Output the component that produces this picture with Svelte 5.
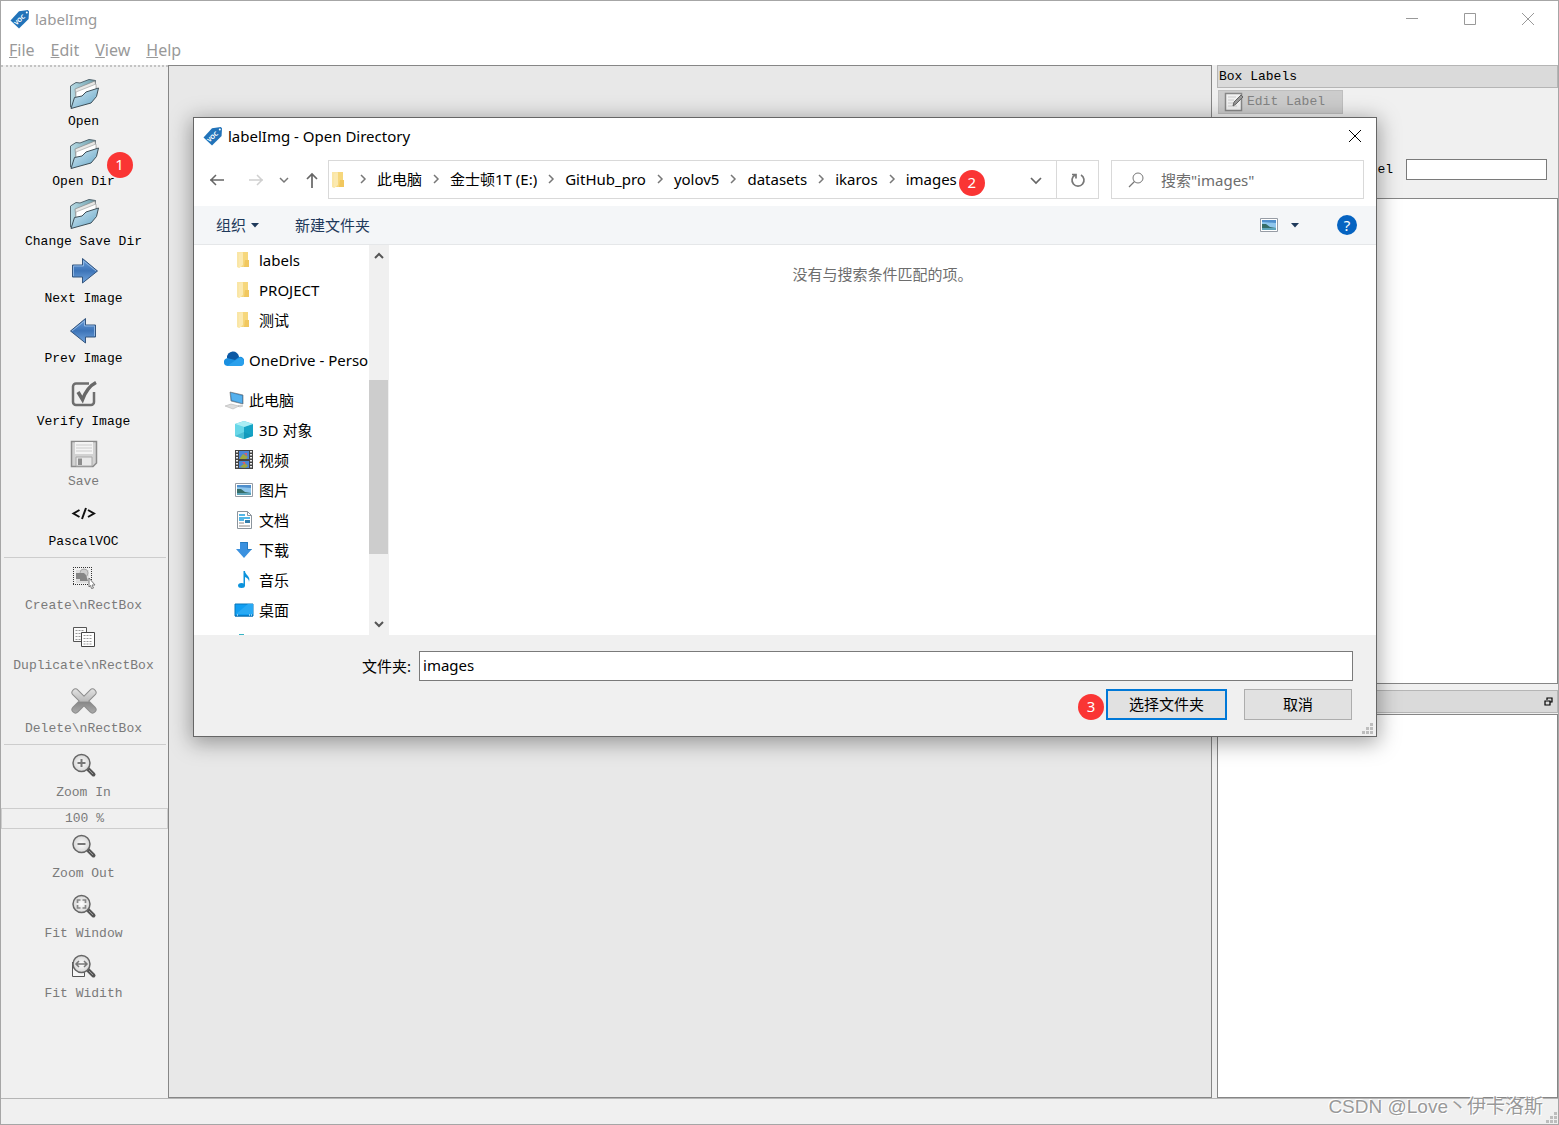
<script>
	const menus = ['File', 'Edit', 'View', 'Help'];

	const toolGroups = [
		[
			{ icon: 'folder', label: 'Open' },
			{ icon: 'folder', label: 'Open Dir', badge: '1' },
			{ icon: 'folder', label: 'Change Save Dir' },
			{ icon: 'next', label: 'Next Image', small: true },
			{ icon: 'prev', label: 'Prev Image', small: true },
			{ icon: 'verify', label: 'Verify Image' },
			{ icon: 'save', label: 'Save', disabled: true },
			{ icon: 'format', label: 'PascalVOC' }
		],
		[
			{ icon: 'create', label: 'Create\\nRectBox', small: true, disabled: true },
			{ icon: 'copy', label: 'Duplicate\\nRectBox', small: true, disabled: true },
			{ icon: 'delete', label: 'Delete\\nRectBox', disabled: true }
		],
		[{ icon: 'zoomin', label: 'Zoom In', small: true, disabled: true }]
	];

	const zoomTools = [
		{ icon: 'zoomout', label: 'Zoom Out', small: true, disabled: true },
		{ icon: 'fitwindow', label: 'Fit Window', small: true, disabled: true },
		{ icon: 'fitwidth', label: 'Fit Widith', small: true, disabled: true }
	];

	const crumbs = ['此电脑', '金士顿1T (E:)', 'GitHub_pro', 'yolov5', 'datasets', 'ikaros', 'images'];

	const tree = [
		{ icon: 'dir', label: 'labels', level: 2 },
		{ icon: 'dir', label: 'PROJECT', level: 2 },
		{ icon: 'dir', label: '测试', level: 2 },
		{ icon: 'cloud', label: 'OneDrive - Personal', level: 1 },
		{ icon: 'pc', label: '此电脑', level: 1 },
		{ icon: 'cube', label: '3D 对象', level: 2 },
		{ icon: 'video', label: '视频', level: 2 },
		{ icon: 'picture', label: '图片', level: 2 },
		{ icon: 'doc', label: '文档', level: 2 },
		{ icon: 'download', label: '下载', level: 2 },
		{ icon: 'music', label: '音乐', level: 2 },
		{ icon: 'desktop', label: '桌面', level: 2 },
		{ icon: 'disk', label: 'Windows', level: 2 }
	];

	let folder = $state('images');
	let search = $state('');
	let zoom = $state('100 %');
	let defaultLabel = $state('');
</script>

{#snippet logo()}
	<svg class="logo" viewBox="0 0 20 20" width="20" height="20" aria-hidden="true">
		<path d="M.5 11.5 9 2.2 17.8 1 19 2.2 18.6 10 9 19.5z" fill="#2273b9" />
		<text x="9.5" y="12.6" text-anchor="middle" transform="rotate(-42 10 10.5)">VOC</text>
		<circle cx="16.8" cy="3.4" r="1" fill="#fff" />
	</svg>
{/snippet}

{#snippet lens()}
	<path d="m20 20 5.500 5.500" stroke="#555" stroke-width="4" stroke-linecap="round" />
	<path d="m21 21 4 4" stroke="#999" stroke-width="1" />
	<circle cx="13.500" cy="14" r="8.500" fill="url(#glass)" stroke="#666" stroke-width="1.500" />
{/snippet}

{#snippet toolIcon(name)}
	<svg viewBox="0 0 32 32" width="32" height="32" fill="none" aria-hidden="true">
		{#if name === 'folder'}
			<path d="M2.500 29V8l5.500-3.500 4 .5L21 1.500l6.500 1-1 9L4 30z" fill="url(#folderBack)" stroke="#53656e" />
			<path d="M7 11 27 3l1 7-20 9z" fill="#e8e8e6" stroke="#888" stroke-width=".7" />
			<path d="m8 14 20-8v6L8 21z" fill="#fff" stroke="#999" stroke-width=".6" />
			<path d="m3 30.500 3.500-11L14 18l4-4 12.500-4-2 8.500L23 25z" fill="url(#folderFront)" stroke="#3e4f58" />
		{:else if name === 'next'}
			<path d="M4.500 10h10V3.500L29.500 16 14.500 28v-6h-10z" fill="url(#blue)" stroke="#33547d" />
			<path d="M5.500 21V11h10V6L28 16" stroke="#8fb6e2" />
		{:else if name === 'prev'}
			<path d="M27.500 10h-10V3.500L2.500 16l15 12v-6h10z" fill="url(#blue)" stroke="#33547d" />
			<path d="M26.500 21V11h-10V6L4 16" stroke="#8fb6e2" />
		{:else if name === 'verify'}
			<path d="M21 5.500H8a3 3 0 0 0-3 3V24a3 3 0 0 0 3 3h15a3 3 0 0 0 3-3V14" stroke="#6e6e6e" stroke-width="2.500" />
			<path d="m10 14 4.500 7.500C17 15 21 8 28 4.500" stroke="#686868" stroke-width="3.500" />
		{:else if name === 'save'}
			<path d="M3.500 3.500h25V25L25 28.500H3.500z" fill="#d2d2d2" stroke="#8b8b8b" stroke-width="1.500" />
			<path d="M7 4h18v12H7z" fill="#f4f4f4" />
			<path d="M8 7h16M8 10h16M8 13h16" stroke="#ccc" />
			<path d="M8 19h16v9H8z" fill="#e9e9e9" stroke="#aaa" />
			<path d="M10 20.500h4V27h-4z" fill="#8d8d8d" />
		{:else if name === 'format'}
			<path d="m11.500 12-6 3.500 6 3.500M20 12l6 3.500-6 3.500M18 10l-4 11" stroke="#111" stroke-width="2" />
		{:else if name === 'create'}
			<path d="M5 5.500h19M5 22.500h19M5.500 5v18M23.500 5v18" stroke="#333" stroke-dasharray="1 1" />
			<path d="M8 8h13v13H8z" fill="#dedede" />
			<circle cx="16" cy="11" r="4" fill="#ccc" stroke="#aaa" />
			<path d="M8 11h8l2 2 2 6h-8v-2H8z" fill="#858585" />
			<path d="m21 16 6 7h-3l1.500 3-2 .5-1-3-1.500 1.500z" fill="#fff" stroke="#777" />
		{:else if name === 'copy'}
			<path d="M5.500 5.500h13v14h-13z" fill="#fafafa" stroke="#555" />
			<path d="M7.500 8.500h9m-9 3h6m-6 3h5m-5 3h5" stroke="#999" stroke-dasharray="2 1" />
			<path d="M13.500 10.500h13v14h-13z" fill="#fff" stroke="#444" />
			<path d="M15.500 13.500h9m-9 3h9m-9 3h9m-9 2.500h9" stroke="#999" stroke-dasharray="2 1" />
		{:else if name === 'delete'}
			<path d="m7.500 7.500 17 17M24.500 7.500l-17 17" stroke="#8c8c8c" stroke-width="8" stroke-linecap="round" />
			<path d="m7.500 7.500 17 17M24.500 7.500l-17 17" stroke="url(#cross)" stroke-width="6" stroke-linecap="round" />
		{:else if name === 'zoomin'}
			{@render lens()}
			<path d="M9.500 14h8m-4-4v8" stroke="#777" stroke-width="2" />
		{:else if name === 'zoomout'}
			{@render lens()}
			<path d="M9.500 14h8" stroke="#777" stroke-width="2" />
		{:else if name === 'fitwindow'}
			{@render lens()}
			<path d="M9.500 13v-3h3m2 0h3v3m0 2v3h-3m-2 0h-3v-3" stroke="#888" stroke-width="1.700" />
		{:else if name === 'fitwidth'}
			<path d="M4.500 12v14.500h12V20" fill="#f7f7f7" stroke="#555" />
			{@render lens()}
			<path d="M8 14h11m-8-3-3 3 3 3m5-6 3 3-3 3" stroke="#777" stroke-width="1.500" />
		{/if}
	</svg>
{/snippet}

{#snippet placeIcon(name)}
	<svg viewBox="0 0 20 20" width="20" height="20" fill="none" aria-hidden="true">
		{#if name === 'dir'}
			<path d="M7 2h7v9l1 1v5H6z" fill="#f6d77c" />
			<path d="M3 2h5v14l-3 2-2-1z" fill="#fae6a6" />
			<path d="m5 4 4-2v13l-4 3z" fill="#fbe9b0" />
			<path d="M11 10h4v7h-5z" fill="#f1c75e" />
		{:else if name === 'cloud'}
			<path d="M0 13a4 4 0 0 1 4-5 6 6 0 0 1 11-1 4 4 0 0 1 5 5c0 3-2 4-4 4H4c-2 0-4-1-4-3z" fill="#1a8fe0" />
			<path d="M3 8a6 6 0 0 1 12-1l-4 3z" fill="#0c59a4" />
			<path d="M3 16 15 8a4 4 0 0 1 5 4c0 3-2 4-4 4z" fill="#2aa0ec" />
		{:else if name === 'pc'}
			<path d="m6 2 13 3v9L7 11z" fill="#3f91ce" stroke="#666" stroke-width=".6" />
			<path d="m7 3 11 3v7L8 10z" fill="#55b1ee" />
			<path d="m1 16 6-2 8 2-6 3zM14 16l3-1 2 1-3 1z" fill="#ddd" stroke="#aaa" stroke-width=".5" />
		{:else if name === 'cube'}
			<path d="m10 1 9 3v12l-9 3-9-3V4z" fill="#42c5df" />
			<path d="m1 4 9 3v12l-9-3z" fill="#68d7e8" />
			<path d="m10 7 9-3v12l-9 3z" fill="#16a3c5" />
			<path d="m1 4 9-3 9 3-9 3z" fill="#a9edf4" />
			<path d="m10 12 9 4-9 3-9-3z" fill="#0987aa" opacity=".3" />
		{:else if name === 'video'}
			<path d="M1 0h18v19H1z" fill="#444" />
			<path d="M5 1h10v8H5zM5 11h10v7H5z" fill="#4b86d6" />
			<path d="m6 8 3-4 5 3-2 2H6zM6 17l5-4 3 3-3 2z" fill="#a0a83e" />
			<path d="M10 3h3v3zM8 12h3v3z" fill="#d95d70" />
			<path d="M3 1v18M17 1v18" stroke="#eee" stroke-width="2" stroke-dasharray="1.500 1.500" />
		{:else if name === 'picture'}
			<path d="M1.500 3.500h17v13h-17z" fill="#fff" stroke="#969ca5" />
			<path d="M3 5h14v10H3z" fill="#8ec6ed" />
			<path d="M3 5h14v3L3 7z" fill="#4f8fcc" />
			<path d="m3 9 4 0 4 3 6 1v2H3z" fill="#356d68" />
			<path d="M3 13h14v2H3z" fill="#5da4ba" />
		{:else if name === 'doc'}
			<path d="M3.500 1.500h10l4 4v13h-14z" fill="#fff" stroke="#8b949c" />
			<path d="M13.500 1.500v4h4" stroke="#8b949c" />
			<path d="M5 5h6M5 8h11M5 10h5" stroke="#1ba0df" stroke-width="1.500" />
			<path d="M11 10h5v3h-5z" fill="#337eac" />
			<path d="M5 13h5m-5 3h11" stroke="#888" />
		{:else if name === 'download'}
			<path d="M6 2h8v7h4l-8 9-8-9h4z" fill="#3b91df" />
			<path d="M6.500 2.500h7v7h4" stroke="#257abe" />
		{:else if name === 'music'}
			<ellipse cx="7.500" cy="15.500" rx="3.500" ry="2.500" fill="#0c93dc" />
			<path d="M9.500 16V1h1.500c0 4 6 5 4 11 0-3-2-4-4-5v9" fill="#0c93dc" />
		{:else if name === 'desktop'}
			<path d="M1 4h18v12H1z" fill="#109ef2" stroke="#0877b9" />
			<path d="m2 14 12-10h5v10z" fill="#28a9f4" />
			<path d="M1 16h18" stroke="#076ab0" />
			<path d="M3 15h1m11 0h1m1 0h1" stroke="#fff" />
		{:else if name === 'disk'}
			<path d="M5 4h5v4H5z" fill="#37b5c5" />
		{/if}
	</svg>
{/snippet}

{#snippet chevron(down = false)}
	<svg class="chevron" viewBox="0 0 10 10" width="10" height="10" fill="none" aria-hidden="true">
		<path d={down ? 'm1 3 4 4 4-4' : 'm3 1 4 4-4 4'} stroke="#777" stroke-width="1.500" />
	</svg>
{/snippet}

{#snippet tool(item)}
	<button class="tool" class:small={item.small} disabled={item.disabled}>
		<span class="tool-icon">
			{@render toolIcon(item.icon)}
			{#if item.badge}<span class="badge">{item.badge}</span>{/if}
		</span>
		<span>{item.label}</span>
	</button>
{/snippet}

{#snippet grip()}
	<svg class="grip" viewBox="0 0 12 12" width="12" height="12" aria-hidden="true">
		<path d="M8 0h3v3H8zM4 4h3v3H4zM8 4h3v3H8zM0 8h3v3H0zM4 8h3v3H4zM8 8h3v3H8z" fill="#bdbdbd" />
	</svg>
{/snippet}

<svg class="defs" width="0" height="0" aria-hidden="true">
	<defs>
		<linearGradient id="folderBack" x2="1"><stop stop-color="#b9dbe5" /><stop offset="1" stop-color="#6a9dab" /></linearGradient>
		<linearGradient id="folderFront" x2="1" y2="1"><stop stop-color="#d4eaf3" /><stop offset="1" stop-color="#66a6c8" /></linearGradient>
		<linearGradient id="blue" x2="0" y2="1"><stop stop-color="#6a9fdc" /><stop offset=".5" stop-color="#3d74b8" /><stop offset="1" stop-color="#74a7df" /></linearGradient>
		<linearGradient id="cross" gradientUnits="userSpaceOnUse" x1="0" y1="4" x2="0" y2="28"><stop stop-color="#e2e2e2" /><stop offset=".5" stop-color="#bbb" /><stop offset=".55" stop-color="#888" /><stop offset="1" stop-color="#aaa" /></linearGradient>
		<radialGradient id="glass"><stop stop-color="#fff" /><stop offset="1" stop-color="#d6d6d6" /></radialGradient>
	</defs>
</svg>

<div class="window">
	<header class="titlebar">
		{@render logo()}
		<span>labelImg</span>
		<div class="window-buttons">
			<button aria-label="Minimize"><svg viewBox="0 0 12 12" width="12" height="12"><path d="M0 5.500h12" /></svg></button>
			<button aria-label="Maximize"><svg viewBox="0 0 12 12" width="12" height="12"><path d="M.5.5h11v11H.5z" /></svg></button>
			<button aria-label="Close"><svg viewBox="0 0 12 12" width="12" height="12"><path d="m0 0 12 12M12 0 0 12" /></svg></button>
		</div>
	</header>

	<nav class="menubar">
		{#each menus as menu}
			<button><u>{menu[0]}</u>{menu.slice(1)}</button>
		{/each}
	</nav>

	<div class="workspace">
		<aside class="toolbar">
			{#each toolGroups as group, i}
				{#if i > 0}<hr />{/if}
				{#each group as item}
					{@render tool(item)}
				{/each}
			{/each}
			<input class="zoom" aria-label="Zoom level" bind:value={zoom} disabled />
			{#each zoomTools as item}
				{@render tool(item)}
			{/each}
		</aside>

		<main class="canvas"></main>

		<aside class="docks">
			<section class="dock labels-dock">
				<h2>Box Labels</h2>
				<button class="edit-label" disabled>
					<svg viewBox="0 0 20 20" width="20" height="20" fill="none" aria-hidden="true">
						<path d="M1.500 1.500h16v17h-16z" fill="#f3f3f3" stroke="#888" stroke-width="1.500" />
						<path d="M4 5h8M4 8h6M4 11h5M4 14h9" stroke="#ccc" />
						<path d="m9 14 1-4 7-7 2 2-7 7z" fill="#999" stroke="#666" />
					</svg>
					Edit Label
				</button>
				<div class="default-label">
					<label><input type="checkbox" />Use default label</label>
					<input type="text" aria-label="Default label" bind:value={defaultLabel} />
				</div>
				<div class="list"></div>
			</section>
			<section class="dock files-dock" aria-label="File List">
				<header>
					<button aria-label="Float">
						<svg viewBox="0 0 9 9" width="9" height="9"><path d="M3 3V1h5v4H6M2.500 1h6M1 4h5v4H1zM.5 4h6" stroke="#000" stroke-width="1.200" /></svg>
					</button>
				</header>
				<div class="list"></div>
			</section>
		</aside>
	</div>

	<footer class="statusbar">
		<span class="watermark">CSDN @Love丶伊卡洛斯</span>
		{@render grip()}
	</footer>

	<div class="dialog" role="dialog" aria-label="labelImg - Open Directory">
		<header class="dialog-title">
			{@render logo()}
			<span>labelImg - Open Directory</span>
			<button aria-label="Close"><svg viewBox="0 0 12 12" width="12" height="12"><path d="m0 0 12 12M12 0 0 12" stroke="#000" /></svg></button>
		</header>

		<div class="location">
			<div class="history">
				<button aria-label="Back"><svg viewBox="0 0 16 16" width="16" height="16"><path d="M15 8H1m6-5L2 8l5 5" stroke="#666" stroke-width="1.500" /></svg></button>
				<button class="forward" aria-label="Forward" disabled><svg viewBox="0 0 16 16" width="16" height="16"><path d="M1 8h14M9 3l5 5-5 5" stroke="#d0d0d0" stroke-width="1.500" /></svg></button>
				<button aria-label="Recent locations">{@render chevron(true)}</button>
				<button aria-label="Up"><svg viewBox="0 0 16 16" width="16" height="16"><path d="M8 16V2M3 7l5-5 5 5" stroke="#666" stroke-width="1.700" /></svg></button>
			</div>
			<div class="address">
				{@render placeIcon('dir')}
				<ol>
					{#each crumbs as crumb}
						<li>{@render chevron()}<a href="#{crumb}">{crumb}</a></li>
					{/each}
				</ol>
				<span class="badge">2</span>
				<button class="expand" aria-label="Previous locations"><svg viewBox="0 0 12 12" width="12" height="12"><path d="m1 4 5 5 5-5" stroke="#666" stroke-width="1.700" /></svg></button>
				<button class="refresh" aria-label="Refresh"><svg viewBox="0 0 16 16" width="16" height="16"><path d="M11 3a6 6 0 1 1-6 0M2 2.500h4v4" stroke="#777" stroke-width="1.700" /></svg></button>
			</div>
			<label class="search">
				<svg viewBox="0 0 16 16" width="16" height="16"><circle cx="10" cy="6" r="5" stroke="#777" /><path d="M6.500 9.500 1 15" stroke="#777" stroke-width="1.200" /></svg>
				<input type="text" aria-label="搜索" placeholder={'搜索"images"'} bind:value={search} />
			</label>
		</div>

		<div class="commands">
			<button>组织 <svg viewBox="0 0 8 5" width="8" height="5"><path d="M0 0h8L4 4.500z" fill="#1e395b" /></svg></button>
			<button>新建文件夹</button>
			<button class="view" aria-label="View">
				{@render placeIcon('picture')}
				<svg viewBox="0 0 8 5" width="8" height="5"><path d="M0 0h8L4 4.500z" fill="#1e395b" /></svg>
			</button>
			<button class="help" aria-label="Help">?</button>
		</div>

		<div class="browser">
			<ul class="tree">
				{#each tree as node}
					<li class:root={node.level === 1}>{@render placeIcon(node.icon)}<span>{node.label}</span></li>
				{/each}
			</ul>
			<div class="scrollbar">
				<svg viewBox="0 0 10 10" width="10" height="10"><path d="m1 7 4-4 4 4" stroke="#555" stroke-width="2" /></svg>
				<div class="track"><div class="thumb"></div></div>
				<svg viewBox="0 0 10 10" width="10" height="10"><path d="m1 3 4 4 4-4" stroke="#555" stroke-width="2" /></svg>
			</div>
			<p class="empty">没有与搜索条件匹配的项。</p>
		</div>

		<form class="dialog-footer" onsubmit={(e) => e.preventDefault()}>
			<div class="field">
				<label for="folder">文件夹:</label>
				<input id="folder" type="text" bind:value={folder} />
			</div>
			<div class="actions">
				<span class="badge">3</span>
				<button class="primary" type="submit">选择文件夹</button>
				<button type="button">取消</button>
			</div>
			{@render grip()}
		</form>
	</div>
</div>

<style>
	:global(body) {
		margin: 0;
	}

	.window,
	.window * {
		box-sizing: border-box;
	}

	.window {
		position: relative;
		display: flex;
		flex-direction: column;
		min-height: 100vh;
		border: 1px solid #a6a6a6;
		background: #f0f0f0;
		color: #000;
		font: 15px/20px 'Noto Sans', 'Noto Sans CJK SC', sans-serif;
	}

	.defs {
		position: absolute;
	}

	svg {
		display: block;
		flex: none;
	}

	button {
		display: flex;
		align-items: center;
		padding: 0;
		border: 0;
		background: none;
		color: inherit;
		font: inherit;
	}

	button svg,
	.scrollbar svg,
	.search svg {
		fill: none;
	}

	input {
		padding: 0;
		border: 0;
		border-radius: 0;
		color: inherit;
		font: inherit;
		outline: none;
	}

	.logo text {
		fill: #fff;
		font: bold 6px 'Open Sans', sans-serif;
	}

	.badge {
		display: flex;
		align-items: center;
		justify-content: center;
		width: 26px;
		height: 26px;
		padding-bottom: 2px;
		border-radius: 50%;
		background: #fa3534;
		color: #fff;
		font: 15px/20px 'Noto Sans', sans-serif;
	}

	.titlebar {
		display: flex;
		align-items: center;
		gap: 5px;
		height: 36px;
		padding: 0 1px 0 9px;
		background: #fff;
		color: #999;
	}

	.window-buttons {
		display: flex;
		margin-left: auto;
	}

	.window-buttons button {
		justify-content: center;
		width: 58px;
		height: 36px;
		stroke: #999;
	}

	.menubar {
		display: flex;
		gap: 16px;
		height: 28px;
		padding: 0 0 3px 8px;
		background: #fff;
		color: #999;
		font-size: 16px;
	}

	.workspace {
		display: flex;
		flex: 1;
		font-family: 'Liberation Mono', monospace;
		font-size: 13px;
	}

	.toolbar {
		display: flex;
		flex-direction: column;
		width: 167px;
		padding-top: 7px;
		border-top: 2px dotted #c4c4c4;
	}

	.tool {
		flex-direction: column;
		gap: 4px;
		height: 60px;
		padding: 4px 2px 0 0;
		line-height: 16px;
		white-space: nowrap;
	}

	.tool.small {
		gap: 7px;
	}

	.tool:disabled {
		color: #7a7a7a;
	}

	.tool-icon {
		position: relative;
		display: flex;
		align-items: center;
		height: 32px;
	}

	.small .tool-icon {
		height: 26px;
	}

	.tool-icon .badge {
		position: absolute;
		top: 14px;
		left: 39px;
	}

	hr {
		width: 162px;
		height: 1px;
		margin: 3px auto;
		border: 0;
		background: #cdcdcd;
	}

	.zoom {
		width: 100%;
		height: 21px;
		border: 1px solid #cdcdcd;
		background: #f0f0f0;
		color: #7a7a7a;
		text-align: center;
	}

	.canvas {
		flex: 1;
		border: 1px solid #868686;
		background: #e8e8e8;
	}

	.docks {
		display: flex;
		flex-direction: column;
		gap: 6px;
		width: 346px;
		padding-left: 5px;
	}

	.dock {
		display: flex;
		flex-direction: column;
	}

	.labels-dock {
		flex: 619;
	}

	.files-dock {
		flex: 408;
	}

	.dock h2,
	.dock header {
		display: flex;
		align-items: center;
		height: 23px;
		margin: 0;
		padding: 0 4px 0 1px;
		border: 1px solid #b5b5b5;
		background: #dadada;
		font-size: 13px;
		font-weight: normal;
	}

	.dock header {
		justify-content: flex-end;
	}

	.edit-label {
		gap: 3px;
		width: 125px;
		height: 24px;
		margin: 2px 1px;
		padding-left: 5px;
		border: 1px solid #bfbfbf;
		background: #ccc;
		color: #838383;
	}

	.default-label {
		display: flex;
		align-items: center;
		justify-content: flex-end;
		gap: 13px;
		margin: 43px 11px 18px 0;
	}

	.default-label label {
		display: flex;
		gap: 4px;
	}

	.default-label input[type='text'] {
		width: 141px;
		height: 21px;
		border: 1px solid #7a7a7a;
		background: #fff;
	}

	.list {
		flex: 1;
		border: 1px solid #868686;
		background: #fff;
	}

	.files-dock .list {
		margin-top: 1px;
	}

	.statusbar {
		display: flex;
		align-items: center;
		justify-content: flex-end;
		height: 26px;
		border-top: 1px solid #b5b5b5;
	}

	.statusbar .grip {
		align-self: flex-end;
	}

	.watermark {
		margin: 0 3px 10px 0;
		color: #999;
		font: 19px/20px 'Liberation Sans', 'Noto Sans CJK SC', sans-serif;
		text-shadow: 1px 1px 0 #fff, -1px -1px 0 #fff;
	}

	.dialog {
		position: absolute;
		top: 116px;
		right: 181px;
		left: 192px;
		border: 1px solid #666;
		background: #fff;
		box-shadow: 0 4px 20px 2px rgba(0, 0, 0, 0.35);
	}

	.dialog-title {
		display: flex;
		align-items: center;
		gap: 5px;
		height: 36px;
		padding: 0 15px 0 9px;
	}

	.dialog-title button {
		margin-left: auto;
	}

	.location {
		display: flex;
		margin: 6px 12px 7px 0;
	}

	.history {
		display: flex;
		align-items: center;
		gap: 15px;
		width: 134px;
		padding-left: 15px;
	}

	.forward {
		margin-left: 8px;
	}

	.address {
		display: flex;
		align-items: center;
		flex: 1;
		height: 39px;
		border: 1px solid #d9d9d9;
	}

	.address ol {
		display: flex;
		margin: 0;
		padding: 0 0 2px;
		list-style: none;
		white-space: nowrap;
	}

	.address li {
		display: flex;
		align-items: center;
	}

	.address .chevron {
		margin: 0 9px;
	}

	.address a {
		color: inherit;
		text-decoration: none;
	}

	.address .badge {
		margin: 6px 0 0 2px;
	}

	.expand {
		margin-left: auto;
		margin-right: 14px;
	}

	.refresh {
		justify-content: center;
		align-self: stretch;
		width: 42px;
		border-left: 1px solid #d9d9d9;
	}

	.search {
		display: flex;
		align-items: center;
		gap: 17px;
		width: 253px;
		margin-left: 12px;
		padding: 0 16px;
		border: 1px solid #d9d9d9;
	}

	.search input {
		width: 100%;
		min-width: 0;
	}

	.search input::placeholder {
		color: #6d6d6d;
		opacity: 1;
	}

	.commands {
		display: flex;
		align-items: center;
		gap: 36px;
		height: 39px;
		padding: 0 19px 0 22px;
		border-bottom: 1px solid #e5e7e9;
		background: #f4f6f8;
		color: #1e395b;
	}

	.commands button {
		gap: 5px;
	}

	.commands .view {
		gap: 12px;
		margin: 0 2px 0 auto;
	}

	.commands .help {
		justify-content: center;
		width: 20px;
		height: 20px;
		border-radius: 50%;
		background: #0563c1;
		color: #fff;
	}

	.browser {
		display: flex;
		height: 390px;
	}

	.tree {
		width: 175px;
		margin: 0;
		padding: 0;
		overflow: hidden;
		list-style: none;
		white-space: nowrap;
	}

	.tree li {
		display: flex;
		align-items: center;
		gap: 5px;
		height: 30px;
		padding-left: 40px;
	}

	.tree span {
		padding-bottom: 1px;
	}

	.tree .root {
		margin-top: 10px;
		padding-left: 30px;
	}

	.scrollbar {
		display: flex;
		flex-direction: column;
		align-items: center;
		gap: 5px;
		width: 20px;
		padding: 6px 1px 6px 0;
		background: #f0f0f0;
	}

	.track {
		display: flex;
		flex-direction: column;
		align-self: stretch;
		justify-content: center;
		flex: 1;
		padding-top: 54px;
	}

	.thumb {
		height: 174px;
		background: #cdcdcd;
	}

	.empty {
		flex: 1;
		margin: 19px 0 0;
		color: #6d6d6d;
		text-align: center;
	}

	.dialog-footer {
		position: relative;
		padding: 16px 23px;
		background: #f0f0f0;
	}

	.field {
		display: flex;
		align-items: center;
		gap: 8px;
		padding-left: 145px;
	}

	.field input {
		flex: 1;
		height: 30px;
		padding: 0 3px 3px;
		border: 1px solid #7a7a7a;
		background: #fff;
	}

	.actions {
		display: flex;
		align-items: center;
		justify-content: flex-end;
		margin-top: 8px;
		padding-right: 1px;
	}

	.actions .badge {
		margin: 5px 2px 0 0;
	}

	.actions button {
		justify-content: center;
		width: 108px;
		height: 31px;
		padding-bottom: 2px;
		border: 1px solid #adadad;
		background: #e1e1e1;
	}

	.actions .primary {
		width: 121px;
		margin-right: 17px;
		border: 2px solid #0078d7;
	}

	.dialog-footer .grip {
		position: absolute;
		right: 2px;
		bottom: 1px;
	}
</style>
